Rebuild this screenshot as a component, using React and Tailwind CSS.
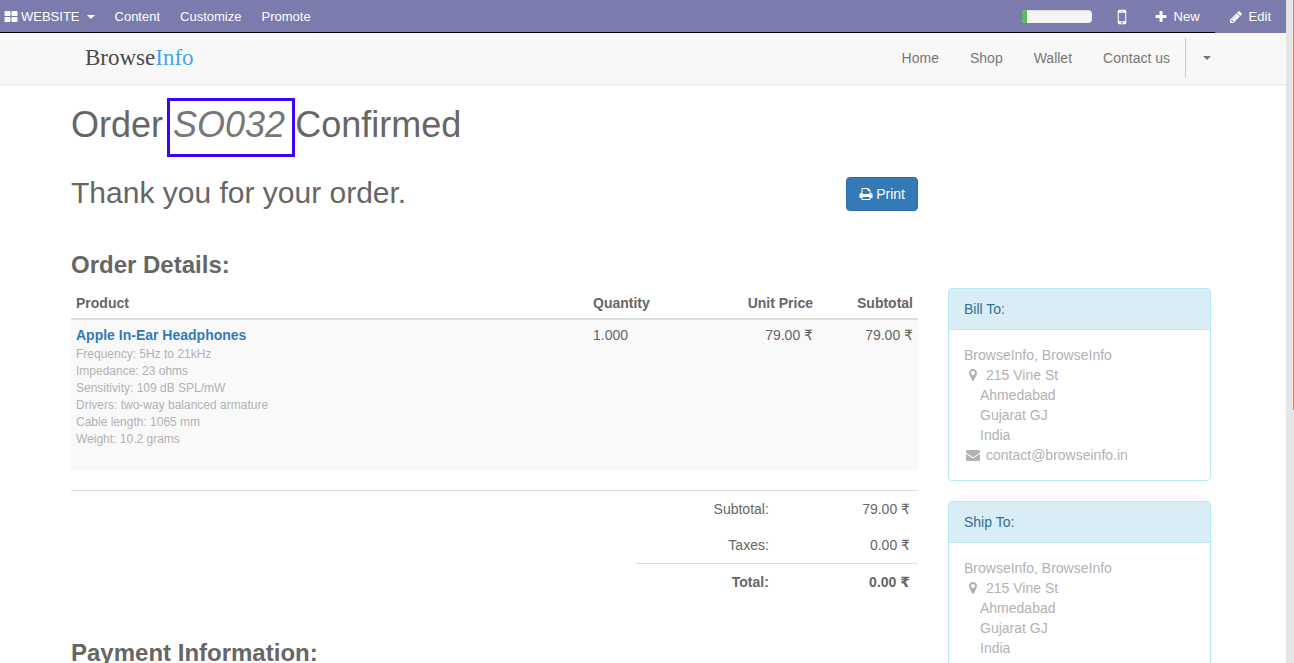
const ICONS = {
  thLarge:
    "M832 1024v384q0 52-38 90t-90 38h-512q-52 0-90-38t-38-90v-384q0-52 38-90t90-38h512q52 0 90 38t38 90zm0-768v384q0 52-38 90t-90 38h-512q-52 0-90-38t-38-90v-384q0-52 38-90t90-38h512q52 0 90 38t38 90zm896 768v384q0 52-38 90t-90 38h-512q-52 0-90-38t-38-90v-384q0-52 38-90t90-38h512q52 0 90 38t38 90zm0-768v384q0 52-38 90t-90 38h-512q-52 0-90-38t-38-90v-384q0-52 38-90t90-38h512q52 0 90 38t38 90z",
  plus: "M1600 736v192q0 40-28 68t-68 28h-416v416q0 40-28 68t-68 28h-192q-40 0-68-28t-28-68v-416h-416q-40 0-68-28t-28-68v-192q0-40 28-68t68-28h416v-416q0-40 28-68t68-28h192q40 0 68 28t28 68v416h416q40 0 68 28t28 68z",
  pencil:
    "M491 1536l91-91-235-235-91 91v107h128v128h107zm523-928q0-22-22-22-10 0-17 7l-542 542q-7 7-7 17 0 22 22 22 10 0 17-7l542-542q7-7 7-17zm-54-192l416 416-832 832h-416v-416zm683 96q0 53-37 90l-166 166-416-416 166-165q36-38 90-38 53 0 91 38l235 234q37 39 37 91z",
  mobile:
    "M976 1408q0-33-23.5-56.5t-56.5-23.5-56.5 23.5-23.5 56.5 23.5 56.5 56.5 23.5 56.5-23.5 23.5-56.5zm208-160v-704q0-13-9.5-22.5t-22.5-9.5h-512q-13 0-22.5 9.5t-9.5 22.5v704q0 13 9.5 22.5t22.5 9.5h512q13 0 22.5-9.5t9.5-22.5zm-192-848q0-16-16-16h-160q-16 0-16 16t16 16h160q16 0 16-16zm288-16v1024q0 52-38 90t-90 38h-512q-52 0-90-38t-38-90v-1024q0-52 38-90t90-38h512q52 0 90 38t38 90z",
  marker:
    "M1152 640q0-106-75-181t-181-75-181 75-75 181 75 181 181 75 181-75 75-181zm256 0q0 109-33 179l-364 774q-16 33-47.5 52t-67.5 19-67.5-19-46.5-52l-365-774q-33-70-33-179 0-212 150-362t362-150 362 150 150 362z",
  envelope:
    "M1792 710v794q0 66-47 113t-113 47h-1472q-66 0-113-47t-47-113v-794q44 49 101 87 362 246 497 345 57 42 92.5 65.5t94.5 48 110 24.5h2q51 0 110-24.5t94.5-48 92.5-65.5q170-123 498-345 57-39 100-87zm0-294q0 79-49 151t-122 123q-376 261-468 325-10 7-42.5 31t-54 38.5-52 32.5-57.5 27-50 9h-2q-23 0-50-9t-57.5-27-52-32.5-54-38.5-42.5-31q-91-64-262-182.5t-205-142.5q-62-42-117-115.5t-55-136.5q0-78 41.5-130t118.5-52h1472q65 0 112.5 47t47.5 113z",
  print:
    "M448 1536h896v-256h-896v256zm0-640h896v-384h-160q-40 0-68-28t-28-68v-160h-640v640zm1152 64q0-26-19-45t-45-19-45 19-19 45 19 45 45 19 45-19 19-45zm128 0v416q0 13-9.5 22.5t-22.5 9.5h-224v160q0 40-28 68t-68 28h-960q-40 0-68-28t-28-68v-160h-224q-13 0-22.5-9.5t-9.5-22.5v-416q0-79 56.5-135.5t135.5-56.5h64v-544q0-40 28-68t68-28h672q40 0 88 20t76 48l152 152q28 28 48 76t20 88v256h64q79 0 135.5 56.5t56.5 135.5z",
};

function Icon({ name, className }) {
  return (
    <svg viewBox="0 0 1792 1792" fill="currentColor" aria-hidden="true" className={className}>
      <path d={ICONS[name]} />
    </svg>
  );
}

function Caret() {
  return (
    <svg viewBox="0 0 8 4" fill="currentColor" aria-hidden="true" className="h-1 w-2">
      <path d="M0 0h8L4 4z" />
    </svg>
  );
}

function Money({ value }) {
  return (
    <>
      {value} <span className="font-['DejaVu_Sans',sans-serif] leading-none">₹</span>
    </>
  );
}

function AdminBar() {
  return (
    <div className="flex h-[33px] items-stretch bg-[#7c7bad] text-[13px] leading-5 text-white">
      <div className="flex grow items-center shadow-[inset_0_-1px_0_#000]">
        <button className="flex items-center pr-[10px] pl-1">
          <Icon name="thLarge" className="mr-[3px] size-[14px]" />
          WEBSITE
          <span className="ml-[7px]">
            <Caret />
          </span>
        </button>
        <a href="#content" className="px-[10px]">Content</a>
        <a href="#customize" className="px-[10px]">Customize</a>
        <a href="#promote" className="px-[10px]">Promote</a>
        <div className="ml-auto flex items-center">
          <div className="h-[13px] w-[70px] overflow-hidden rounded bg-[#f5f5f5] shadow-[inset_0_1px_2px_rgba(0,0,0,0.1)]">
            <div className="h-full w-[5px] bg-[#5cb85c]" />
          </div>
          <button aria-label="Mobile preview" className="ml-5">
            <Icon name="mobile" className="size-5" />
          </button>
          <button className="ml-[22px] flex items-center pr-[15px]">
            <Icon name="plus" className="mr-1.5 size-[14px]" />
            New
          </button>
        </div>
      </div>
      <button className="flex items-center pr-[15px] pl-[14px]">
        <Icon name="pencil" className="mr-1.5 size-[14px]" />
        Edit
      </button>
    </div>
  );
}

function SiteNav() {
  return (
    <header className="border-b border-[#e7e7e7] bg-[#f8f8f8] pr-1 pb-px">
      <div className="mx-auto flex h-[50px] max-w-[1140px] items-center justify-between text-[14px] leading-5 text-[#777]">
        <a
          href="#home"
          className="pl-[14px] font-['Liberation_Serif',serif] text-[23px] leading-7 text-[#4a4a4a]"
        >
          Browse<span className="text-[#45a5e6]">Info</span>
        </a>
        <div className="flex items-center">
          <nav className="flex items-center gap-px">
            <a href="#home" className="px-[15px]">Home</a>
            <a href="#shop" className="px-[15px]">Shop</a>
            <a href="#wallet" className="px-[15px]">Wallet</a>
            <a href="#contact" className="px-[15px]">Contact us</a>
          </nav>
          <button aria-label="Account menu" className="flex h-10 items-center border-l border-[#ccc] pl-[17px]">
            <Caret />
          </button>
        </div>
      </div>
    </header>
  );
}

const SPECS = [
  "Frequency: 5Hz to 21kHz",
  "Impedance: 23 ohms",
  "Sensitivity: 109 dB SPL/mW",
  "Drivers: two-way balanced armature",
  "Cable length: 1065 mm",
  "Weight: 10.2 grams",
];

function OrderLines() {
  return (
    <table className="w-full table-fixed">
      <colgroup>
        <col />
        <col className="w-[100px]" />
        <col className="w-[130px]" />
        <col className="w-[100px]" />
      </colgroup>
      <thead>
        <tr className="border-b-2 border-[#ddd]">
          <th className="p-[5px] text-left">Product</th>
          <th className="p-[5px] text-left">Quantity</th>
          <th className="p-[5px] text-right">Unit Price</th>
          <th className="p-[5px] text-right">Subtotal</th>
        </tr>
      </thead>
      <tbody>
        <tr className="bg-[#f9f9f9] align-top">
          <td className="px-[5px] pt-[5px] pb-[22px]">
            <a href="#product" className="font-bold text-[#337ab7]">Apple In-Ear Headphones</a>
            <div className="pt-px text-[12px] leading-[17px] text-[#b2b2b2]">
              {SPECS.map((line) => (
                <div key={line}>{line}</div>
              ))}
            </div>
          </td>
          <td className="p-[5px]">1.000</td>
          <td className="p-[5px] text-right"><Money value="79.00" /></td>
          <td className="p-[5px] text-right"><Money value="79.00" /></td>
        </tr>
      </tbody>
    </table>
  );
}

function Totals() {
  return (
    <table className="ml-auto w-1/3 table-fixed text-right">
      <tbody>
        <tr>
          <td className="p-2">Subtotal:</td>
          <td className="p-2"><Money value="79.00" /></td>
        </tr>
        <tr>
          <td className="p-2">Taxes:</td>
          <td className="p-2"><Money value="0.00" /></td>
        </tr>
        <tr className="border-t border-[#ddd] font-bold">
          <td className="p-2">Total:</td>
          <td className="p-2"><Money value="0.00" /></td>
        </tr>
      </tbody>
    </table>
  );
}

function AddressPanel({ title, email }) {
  return (
    <section className="mb-5 overflow-hidden rounded border border-[#bce8f1]">
      <h4 className="border-b border-[#bce8f1] bg-[#d9edf7] px-[15px] py-[10px] text-[#31708f]">{title}</h4>
      <address className="p-[15px] text-[#b2b2b2] not-italic">
        <div>BrowseInfo, BrowseInfo</div>
        <div className="flex items-center">
          <Icon name="marker" className="mr-1.5 ml-0.5 size-[14px]" />
          215 Vine St
        </div>
        <div className="pl-4">Ahmedabad</div>
        <div className="pl-4">Gujarat GJ</div>
        <div className="pl-4">India</div>
        {email && (
          <div className="flex items-center">
            <Icon name="envelope" className="mr-1.5 ml-0.5 size-[14px]" />
            {email}
          </div>
        )}
      </address>
    </section>
  );
}

export default function App() {
  return (
    <div className="flex h-screen overflow-hidden bg-white font-['Liberation_Sans',Arial,sans-serif] text-[14px] leading-5 text-[#666]">
      <div className="min-w-0 grow">
        <AdminBar />
        <SiteNav />
        <main className="pr-1">
          <div className="mx-auto max-w-[1140px] pt-5">
            <h1 className="text-[36px] leading-10">
              Order{" "}
              <em className="relative text-[#777]">
                SO032
                <span className="absolute -top-1.5 -right-[10px] -left-1.5 h-[59px] border-3 border-[#3f00ff]" />
              </em>{" "}
              Confirmed
            </h1>
            <div className="grid grid-cols-[minmax(0,1fr)_263px] gap-x-[30px]">
              <div>
                <div className="mt-8 flex items-start justify-between">
                  <h2 className="text-[30px] leading-8">Thank you for your order.</h2>
                  <button className="flex items-center rounded border border-[#2e6da4] bg-[#337ab7] px-3 py-1.5 text-white">
                    <Icon name="print" className="mr-[3px] size-[14px]" />
                    Print
                  </button>
                </div>
                <h3 className="mt-[41px] mb-[10px] text-[24px] leading-[26px] font-bold">Order Details:</h3>
                <OrderLines />
                <hr className="mt-5 border-[#ddd]" />
                <Totals />
                <h3 className="mt-10 text-[24px] leading-[26px] font-bold">Payment Information:</h3>
              </div>
              <aside className="pt-[143px]">
                <AddressPanel title="Bill To:" email="contact@browseinfo.in" />
                <AddressPanel title="Ship To:" />
              </aside>
            </div>
          </div>
        </main>
      </div>
      <div className="w-2 shrink-0 bg-[#e5e5e5]">
        <div className="h-[410px] border-r border-[#e0845c]" />
      </div>
    </div>
  );
}
